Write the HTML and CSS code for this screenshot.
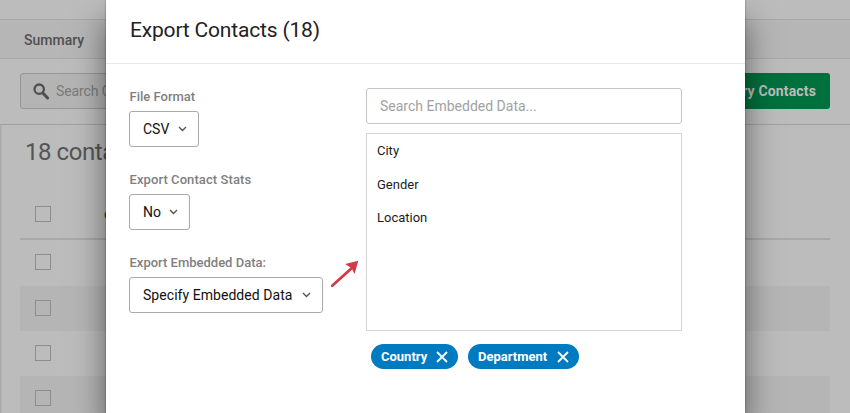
FILE: index.html
```html
<!DOCTYPE html>
<html lang="en">
<head>
<meta charset="utf-8">
<title>Export Contacts</title>
<link rel="stylesheet" href="styles.css">
</head>
<body>
<div class="page">
  <div class="topbar"></div>
  <nav class="tabs"><span class="tab">Summary</span></nav>
  <div class="toolbar">
    <div class="search">
      <svg class="search-icon" width="16" height="17" viewBox="0 0 16 17"><circle cx="6.2" cy="6.2" r="4.7" fill="none" stroke="currentColor" stroke-width="2.3"/><path d="M9.7 9.9 L14.6 15" stroke="currentColor" stroke-width="3" stroke-linecap="round"/></svg>
      <span class="search-text">Search C</span>
    </div>
    <div class="primary">ry Contacts</div>
  </div>
  <main class="panel">
    <h1 class="count">18 conta</h1>
    <div class="table">
      <div class="row head"><i class="check"></i><span class="col">e</span></div>
      <div class="row first"><i class="check"></i></div>
      <div class="row alt"><i class="check"></i></div>
      <div class="row"><i class="check"></i></div>
      <div class="row alt last"><i class="check"></i></div>
    </div>
  </main>
</div>
<section class="modal">
  <header class="modal-head"><h2 class="title">Export Contacts (18)</h2></header>
  <div class="modal-body">
    <div class="options">
      <div class="field"><label class="label">File Format</label>
        <div class="select s-format"><span>CSV</span><svg class="chev" width="9" height="6" viewBox="0 0 9 6"><path d="M1 1 L4.5 4.5 L8 1"/></svg></div></div>
      <div class="field"><label class="label l-stats">Export Contact Stats</label>
        <div class="select s-stats"><span>No</span><svg class="chev" width="9" height="6" viewBox="0 0 9 6"><path d="M1 1 L4.5 4.5 L8 1"/></svg></div></div>
      <div class="field"><label class="label">Export Embedded Data:</label>
        <div class="select s-data"><span>Specify Embedded Data</span><svg class="chev" width="9" height="6" viewBox="0 0 9 6"><path d="M1 1 L4.5 4.5 L8 1"/></svg></div></div>
    </div>
    <div class="picker">
      <div class="filter">Search Embedded Data...</div>
      <ul class="list"><li>City</li><li>Gender</li><li>Location</li></ul>
      <div class="tags">
        <span class="tag t-country"><span>Country</span><svg width="12" height="12" viewBox="0 0 12 12"><path d="M1 1 L11 11 M11 1 L1 11"/></svg></span>
        <span class="tag t-dept"><span>Department</span><svg width="12" height="12" viewBox="0 0 12 12"><path d="M1 1 L11 11 M11 1 L1 11"/></svg></span>
      </div>
    </div>
  </div>
  <svg class="arrow" width="30" height="28" viewBox="0 0 30 28"><path d="M2.2 25.8 L21 8.7" fill="none" stroke="#d13a46" stroke-width="2.8" stroke-linecap="round"/><path d="M28.3 0.7 L24.6 14 L21.6 8.2 L15.2 4 Z" fill="#d13a46"/></svg>
</section>
</body>
</html>
```

FILE: styles.css
```css
* { box-sizing: border-box; }
body { margin: 0; width: 850px; height: 413px; overflow: hidden; position: relative; font-family: Roboto, "Liberation Sans", sans-serif; font-size: 14px; background: #bcbcbc; }
.page { height: 413px; overflow: hidden; color: #555; }
.topbar { height: 20px; border-bottom: 1px solid #a8a8a8; }
.tabs { height: 39px; background: #b6b6b6; border-bottom: 1px solid #a8a8a8; padding: 2px 0 0 24px; display: flex; align-items: center; }
.tab { color: #505050; font-weight: 500; letter-spacing: 0; }
.toolbar { height: 66px; border-bottom: 1px solid #a0a0a0; padding: 14px 20px 0; display: flex; justify-content: space-between; }
.search { width: 300px; height: 36px; border: 1px solid #969696; border-radius: 3px; background: #b4b4b4; display: flex; align-items: center; padding-left: 12px; color: #505050; }
.search-text { margin-left: 7px; color: #7b7b7b; letter-spacing: -.1px; }
.primary { height: 36px; width: 150px; border-radius: 3px; background: #00703c; color: #bcbcbc; font-weight: 700; display: flex; align-items: center; justify-content: flex-end; padding-right: 14px; letter-spacing: .15px; }
.panel { height: 288px; padding: 10px 20px 0; box-shadow: inset 3px 0 2px -2px #a4a4a4; }
.count { margin: 0; padding-left: 5px; height: 34px; line-height: 34px; font-size: 24px; font-weight: 400; letter-spacing: -.45px; color: #555; }
.row { height: 45px; padding: 0 0 1px 15px; display: flex; align-items: center; }
.row.head { height: 71px; border-bottom: 2px solid #a8a8a8; padding-top: 21px; }
.row.first { height: 46px; padding-bottom: 2px; }
.row.alt { background: #b5b5b5; }
.row.last { height: 37px; padding-top: 14px; align-items: flex-start; }
.check { width: 16px; height: 16px; border: 1px solid #8d8d8d; }
.col { margin-left: 53px; color: #444; font-weight: 500; }
.modal { position: absolute; left: 106px; top: 0; width: 639px; height: 413px; background: #fff; box-shadow: 0 20px 30px rgba(0,0,0,.5), 0 0 2px rgba(0,0,0,.4); }
.modal-head { height: 64px; border-bottom: 1px solid #e8e8e8; padding: 14px 0 0 24px; }
.title { margin: 0; font-size: 21px; line-height: 33px; font-weight: 400; letter-spacing: -.18px; color: #222; }
.modal-body { display: flex; padding: 24px 0 0 23px; }
.options { width: 237px; }
.field { height: 83px; }
.label { display: block; height: 23px; line-height: 18px; font-size: 13px; font-weight: 500; color: #808080; padding-left: .5px; }
.l-stats { letter-spacing: .08px; }
.select { display: flex; align-items: center; justify-content: space-between; height: 36px; border: 1px solid #aaa; border-radius: 3px; padding: 0 11px 0 13px; color: #111; }
.s-format { width: 70px; }
.s-stats { width: 61px; }
.s-data { width: 194px; letter-spacing: .05px; }
.chev { fill: none; stroke: #555; stroke-width: 1.4; }
.picker { width: 316px; }
.filter { height: 36px; border: 1px solid #c4c4c4; border-radius: 3px; padding-left: 13px; line-height: 34px; color: #a2a2a2; }
.list { margin: 9px 0 0; padding: 0 0 0 10px; height: 198px; border: 1px solid #d5d5d5; list-style: none; font-size: 13px; color: #1c1c1c; }
.list li { height: 33.5px; line-height: 34px; }
.tags { display: flex; gap: 10px; padding: 13px 0 0 5px; }
.tag { height: 25px; border-radius: 13px; background: #007ac0; color: #fff; font-size: 13px; font-weight: 700; display: flex; align-items: center; justify-content: space-between; padding: 0 10px; }
.tag svg { stroke: #fff; stroke-width: 1.8; fill: none; }
.t-country { width: 87px; }
.t-dept { width: 111px; }
.arrow { position: absolute; left: 224px; top: 260px; }
```
